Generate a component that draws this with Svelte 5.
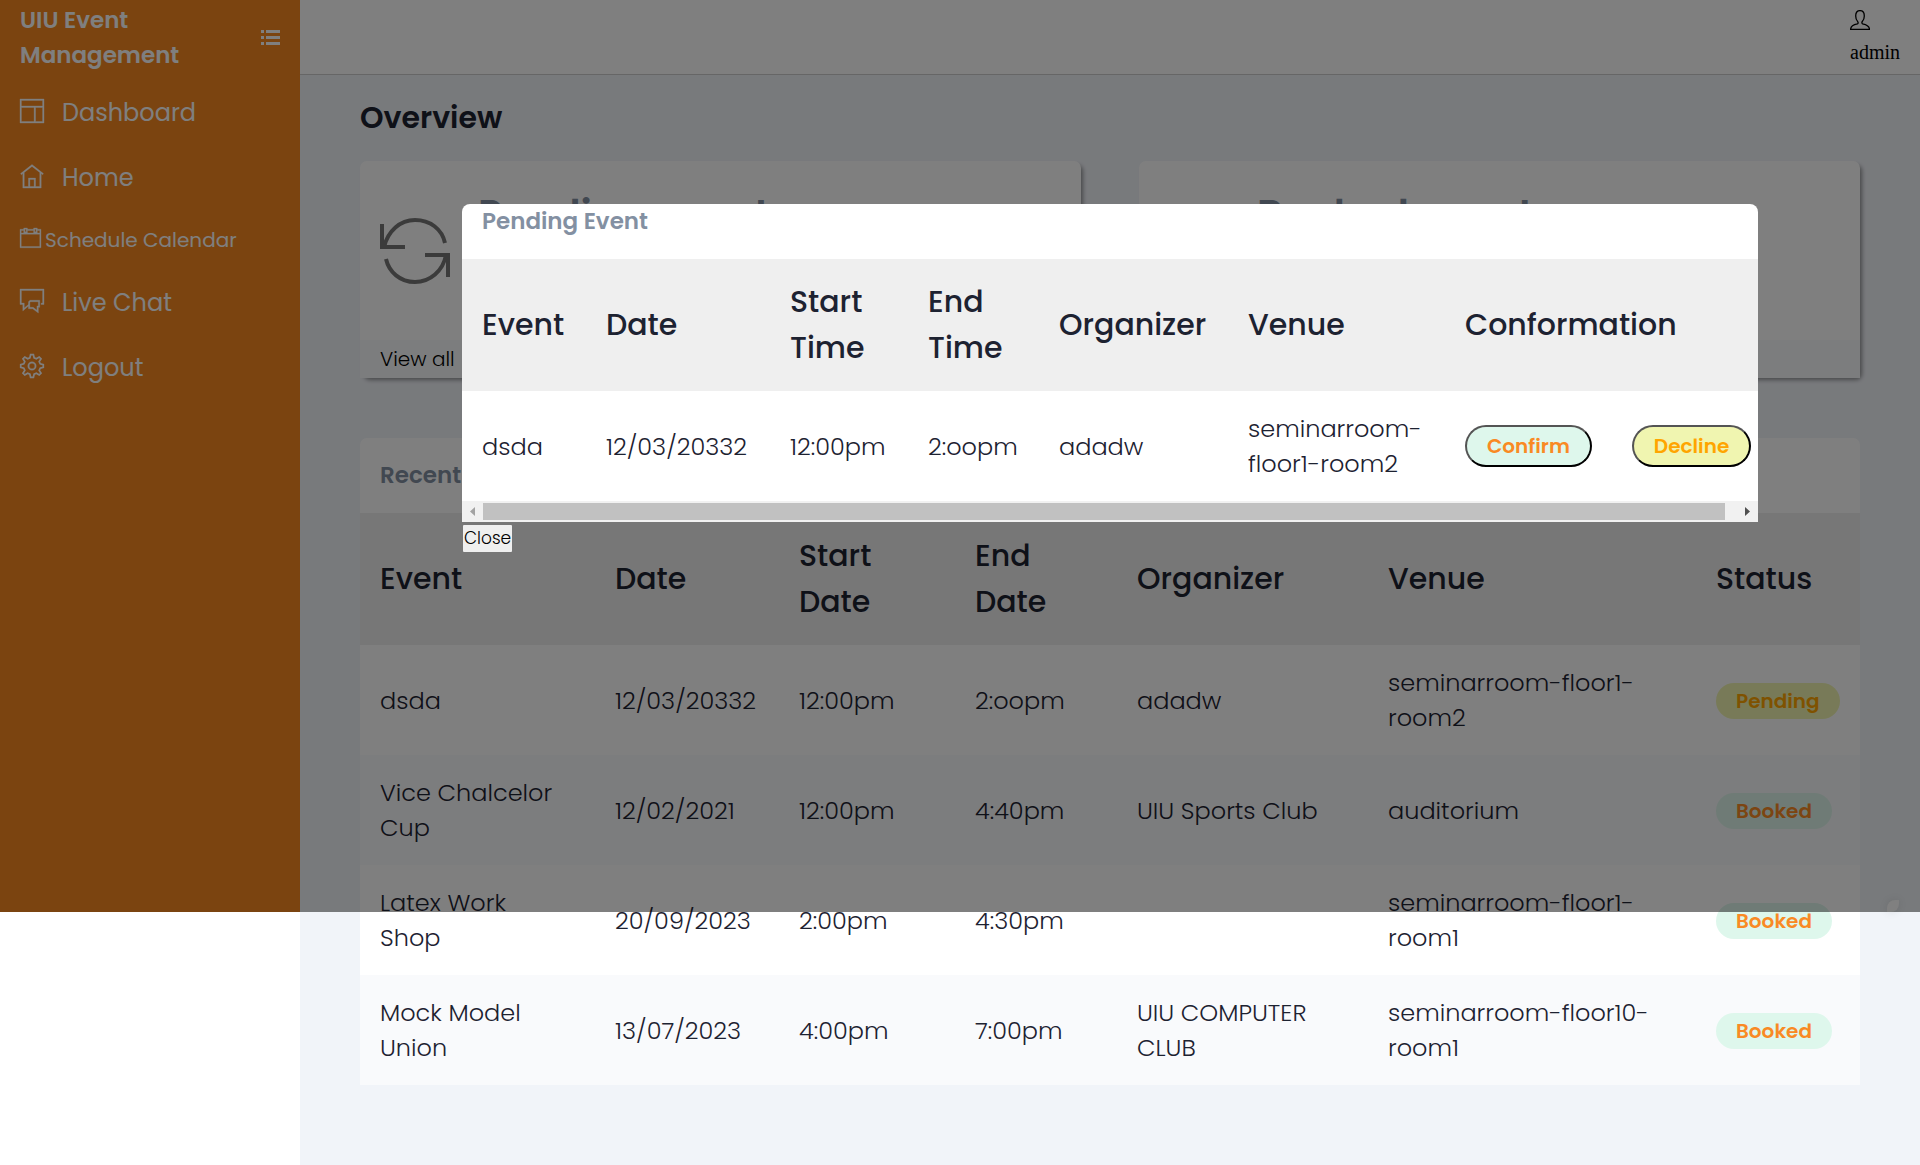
<script>
  const nav = [
    { label: 'Dashboard', icon: 'layout' },
    { label: 'Home', icon: 'home' },
    { label: 'Schedule Calendar', icon: 'calendar', compact: true },
    { label: 'Live Chat', icon: 'chat' },
    { label: 'Logout', icon: 'gear' }
  ];
  const cards = [
    { title: 'Pending event', icon: true },
    { title: 'Booked event', icon: false }
  ];
  const rows = [
    ['dsda', '12/03/20332', '12:00pm', '2:oopm', 'adadw', 'seminarroom-floor1-room2', 'Pending'],
    ['Vice Chalcelor Cup', '12/02/2021', '12:00pm', '4:40pm', 'UIU Sports Club', 'auditorium', 'Booked'],
    ['Latex Work Shop', '20/09/2023', '2:00pm', '4:30pm', '', 'seminarroom-floor1-room1', 'Booked'],
    ['Mock Model Union', '13/07/2023', '4:00pm', '7:00pm', 'UIU COMPUTER CLUB', 'seminarroom-floor10-room1', 'Booked']
  ];
  const heads = ['Event', 'Date', 'Start Date', 'End Date', 'Organizer', 'Venue', 'Status'];
  const modalHeads = ['Event', 'Date', 'Start Time', 'End Time', 'Organizer', 'Venue', 'Conformation'];
</script>

<div class="page">
  <aside class="sidebar">
    <div class="brand">
      <h1>UIU Event Management</h1>
      <button class="toggle" aria-label="Toggle menu">
        <svg width="19" height="16" viewBox="0 0 19 16" fill="currentColor">
          <path d="M0 0h3v3H0zM5 0h14v3H5zM0 6h3v3H0zM5 6h14v3H5zM0 12h3v3H0zM5 12h14v3H5z" />
        </svg>
      </button>
    </div>
    <nav>
      {#each nav as item}
        <a href="#top" class:compact={item.compact}>
          <svg viewBox="0 0 17 17" fill="currentColor" fill-rule="evenodd" stroke="currentColor" stroke-width=".25">
            {#if item.icon === 'layout'}
              <path d="M0 0v17h17V0H0zM16 1v4H1V1h15zM1 6h9v10H1V6zM11 16V6h5v10h-5z" />
            {:else if item.icon === 'home'}
              <path d="M16.600 6.800l-.6.8-1-.8V17H2V6.800l-1 .8-.6-.8L8.500 .4zM14 16V6L8.500 1.700 3 6v10h3v-6h5v6h3zM10 16v-5H7v5h3z" />
            {:else if item.icon === 'calendar'}
              <path d="M14 1V0h-3v1H6V0H3v1H0v15h17V1h-3zM12 1h1v2h-1V1zM4 1h1v2H4V1zM16 15H1V5h15v10zM1 4V2h2v2h3V2h5v2h3V2h2v2H1z" />
            {:else if item.icon === 'chat'}
              <path d="M0 0v11h2v4.500L6 12V11l-3 2.400V10H1V1h15v9h-1v1h2V0H0zM7 8h7v5h-1v4l-4-3H6V9zM7.500 9L7 9.500V13h2.300L12 15v-3h1V9H7.500z" />
            {:else}
              <path d="M8.500 5.500a3 3 0 1 0 0 6 3 3 0 0 0 0-6zm0 1a2 2 0 1 1 0 4 2 2 0 0 1 0-4z" />
              <path d="M7.500 .5h2l.5 2.200 1.600.7 2-1.300 1.300 1.300-1.300 2 .7 1.600 2.200.5v2l-2.200.5-.7 1.600 1.300 2-1.300 1.300-2-1.300-1.600.7-.5 2.200h-2L7 14.300l-1.600-.7-2 1.300-1.300-1.300 1.300-2L2.700 10 .5 9.500v-2L2.700 7l.7-1.600-1.300-2 1.300-1.300 2 1.300L7 2.700z" fill="none" stroke-width="1.200" />
            {/if}
          </svg>
          <span>{item.label}</span>
        </a>
      {/each}
    </nav>
  </aside>

  <div class="content">
    <header>
      <div class="user">
        <svg width="20" height="20" viewBox="0 0 20 20" fill="none" stroke="currentColor" stroke-width="1.300">
          <path d="M.6 19.400h18.900c0-3.500-3.500-4.900-6.900-5.600-.9-.4-.9-1.500-.3-2.300 1.500-1.500 2-3.400 2-5.600C14.300 2.500 12.700.6 10 .6S5.700 2.500 5.700 6c0 2.200.5 4.100 2 5.600.6.8.6 1.900-.3 2.300C4 14.600.6 16 .6 19.400z" />
        </svg>
        <span>admin</span>
      </div>
    </header>

    <main>
      <h2>Overview</h2>
      <div class="cards">
        {#each cards as card}
          <section class="card">
            <div class="card-body">
              <div class="card-icon">
                {#if card.icon}
                  <svg width="70" height="66" viewBox="0 0 70 66" fill="none" stroke="currentColor" stroke-width="4">
                    <path d="M2 6v23h23M4 29C8 13 20 2 35 2c15 0 27 9 30 23M68 59V37H45M66 37C63 53 50 64 35 64 20 64 9 54 6 41" />
                  </svg>
                {/if}
              </div>
              <h3>{card.title}</h3>
            </div>
            <div class="card-foot"><a href="#top">View all</a></div>
          </section>
        {/each}
      </div>

      <section class="recent">
        <h3>Recent Event</h3>
        <table>
          <colgroup>
            <col class="r1" /><col class="r2" /><col class="r3" /><col class="r4" /><col class="r5" /><col class="r6" /><col class="r7" />
          </colgroup>
          <thead>
            <tr>{#each heads as h}<th>{h}</th>{/each}</tr>
          </thead>
          <tbody>
            {#each rows as row}
              <tr>
                {#each row as cell, i}
                  <td>
                    {#if i === 6}<span class="badge" class:pending={cell === 'Pending'}>{cell}</span>{:else}{cell}{/if}
                  </td>
                {/each}
              </tr>
            {/each}
          </tbody>
        </table>
      </section>
    </main>
  </div>

  <div class="overlay">
    <div class="dialog" role="dialog" aria-labelledby="pending-title">
      <div class="panel">
        <h3 id="pending-title">Pending Event</h3>
        <table>
          <colgroup>
            <col class="m1" /><col class="m2" /><col class="m3" /><col class="m4" /><col class="m5" /><col class="m6" /><col class="m7" />
          </colgroup>
          <thead>
            <tr>{#each modalHeads as h}<th>{h}</th>{/each}</tr>
          </thead>
          <tbody>
            <tr>
              {#each rows[0].slice(0, 6) as cell}<td>{cell}</td>{/each}
              <td>
                <div class="actions">
                  <button class="badge">Confirm</button>
                  <button class="badge pending">Decline</button>
                </div>
              </td>
            </tr>
          </tbody>
        </table>
        <div class="scrollbar">
          <svg class="off" width="21" height="21" viewBox="0 0 21 21" fill="currentColor"><path d="M13 6v9l-5-4.500z" /></svg>
          <div class="thumb"></div>
          <svg width="33" height="21" viewBox="0 0 33 21" fill="currentColor"><path d="M20 6v9l5-4.500z" /></svg>
        </div>
      </div>
      <button class="close">Close</button>
    </div>
    <span class="leaf"></span>
  </div>
</div>

<style>
  :global(body) {
    margin: 0;
    background: #fff;
  }
  .page {
    position: relative;
    display: flex;
    min-height: 100vh;
    font-family: Poppins, Inter, "Open Sans", sans-serif;
    color: #1d2231;
  }
  h1, h2, h3 {
    margin: 0;
  }
  button {
    font: inherit;
  }
  a {
    color: inherit;
    text-decoration: none;
  }
  .sidebar {
    flex: none;
    box-sizing: border-box;
    width: 300px;
    height: 912px;
    padding: 0 20px;
    background: #f68820;
    color: #fff;
  }
  .brand {
    display: flex;
    align-items: center;
    justify-content: space-between;
    height: 75px;
  }
  .brand h1 {
    width: 200px;
    font-size: 23px;
    line-height: 35px;
    font-weight: 600;
  }
  .toggle {
    display: flex;
    padding: 0;
    border: 0;
    background: none;
    color: inherit;
  }
  nav {
    display: flex;
    flex-direction: column;
    gap: 30px;
    padding-top: 20px;
  }
  nav a {
    display: flex;
    align-items: center;
    gap: 18px;
    font-size: 24px;
    line-height: 35px;
  }
  nav svg {
    width: 24px;
    height: 24px;
    margin-bottom: 3px;
    overflow: visible;
  }
  nav a.compact {
    gap: 4px;
    font-size: 20px;
    line-height: 30px;
  }
  nav .compact svg {
    width: 21px;
    height: 21px;
  }
  .content {
    flex: 1;
    min-width: 0;
    background: #f1f4f9;
  }
  header {
    box-sizing: border-box;
    display: flex;
    justify-content: flex-end;
    height: 75px;
    padding: 10px 20px;
    background: #fff;
    border-bottom: 1px solid #ccc;
  }
  .user {
    display: flex;
    flex-direction: column;
    gap: 11px;
    font-family: "Liberation Serif", serif;
    font-size: 20px;
    line-height: 22px;
    color: #000;
  }
  main {
    padding: 20px 60px 80px;
  }
  h2 {
    font-size: 30px;
    line-height: 46px;
    font-weight: 600;
  }
  .cards {
    display: grid;
    grid-template-columns: 1fr 1fr;
    gap: 58px;
    margin: 20px 0 60px;
  }
  .card {
    background: #fff;
    border-radius: 7px;
    box-shadow: 3px 3px 4px -1px rgba(0, 0, 0, 0.4);
  }
  .card-body {
    box-sizing: border-box;
    display: flex;
    gap: 26px;
    height: 179px;
    padding: 24px 20px;
  }
  .card-icon {
    display: flex;
    align-items: center;
    width: 72px;
    color: #777;
  }
  .card h3 {
    font-size: 40px;
    line-height: 60px;
    font-weight: 600;
    color: #8390a2;
  }
  .card-foot {
    padding: 2px 20px;
    background: #f9fafc;
    font-size: 20px;
    line-height: 34px;
    font-weight: 300;
    color: #000;
  }
  .recent {
    background: #fff;
    border-radius: 7px 7px 0 0;
  }
  .recent h3, .panel h3 {
    font-size: 23px;
    line-height: 35px;
    font-weight: 600;
    color: #8390a2;
  }
  .recent h3 {
    padding: 20px;
  }
  table {
    width: 100%;
    border-collapse: collapse;
    table-layout: fixed;
  }
  thead {
    background: #efefef;
  }
  th, td {
    padding: 20px;
    text-align: left;
    vertical-align: middle;
  }
  th {
    font-size: 30px;
    line-height: 46px;
    font-weight: 500;
  }
  td {
    height: 70px;
    font-size: 24px;
    line-height: 35px;
    font-weight: 300;
  }
  .recent td:first-child {
    padding-right: 30px;
  }
  .recent tbody tr:nth-child(even) {
    background: #f9fafc;
  }
  .r1 { width: 235px; }
  .r2 { width: 184px; }
  .r3 { width: 176px; }
  .r4 { width: 162px; }
  .r5 { width: 251px; }
  .r7 { width: 164px; }
  .badge {
    display: inline-block;
    padding: 3px 20px;
    border-radius: 18px;
    background: #def7ec;
    color: #f98a24;
    font-size: 20px;
    line-height: 30px;
    font-weight: 600;
  }
  .badge.pending {
    background: #f0f5b0;
    color: orange;
  }
  .overlay {
    position: absolute;
    top: 0;
    left: 0;
    box-sizing: border-box;
    width: 100%;
    height: 912px;
    padding: 204px 162px 0 462px;
    background: rgba(0, 0, 0, 0.5);
  }
  .dialog {
    display: flex;
    flex-direction: column;
    align-items: flex-start;
    gap: 3px;
  }
  .panel {
    width: 100%;
    background: #fff;
    border-radius: 8px 8px 0 0;
    overflow: hidden;
  }
  .panel h3 {
    padding: 0 20px 20px;
  }
  .panel table {
    width: 1309px;
  }
  .m1 { width: 124px; }
  .m2 { width: 184px; }
  .m3 { width: 138px; }
  .m4 { width: 131px; }
  .m5 { width: 189px; }
  .m6 { width: 217px; }
  .actions {
    display: flex;
    gap: 40px;
  }
  .actions .badge {
    padding: 4px 20px;
    border: 2px outset #000;
    border-radius: 21px;
  }
  .scrollbar {
    display: flex;
    background: #f1f1f1;
    color: #505050;
  }
  .scrollbar .off {
    color: #a3a3a3;
  }
  .thumb {
    flex: 1;
    margin: 2px 0;
    background: #c1c1c1;
  }
  .close {
    margin-left: 1px;
    padding: 0 1px;
    border: 0;
    border-radius: 1px;
    background: #efefef;
    font-size: 17px;
    line-height: 27px;
    font-weight: 300;
    color: #000;
  }
  .leaf {
    position: absolute;
    right: 21px;
    bottom: 0;
    width: 12px;
    height: 12px;
    border-radius: 8px 0;
    background: #808080;
    box-shadow: 0 0 8px rgba(0, 0, 0, 0.1);
  }
</style>
